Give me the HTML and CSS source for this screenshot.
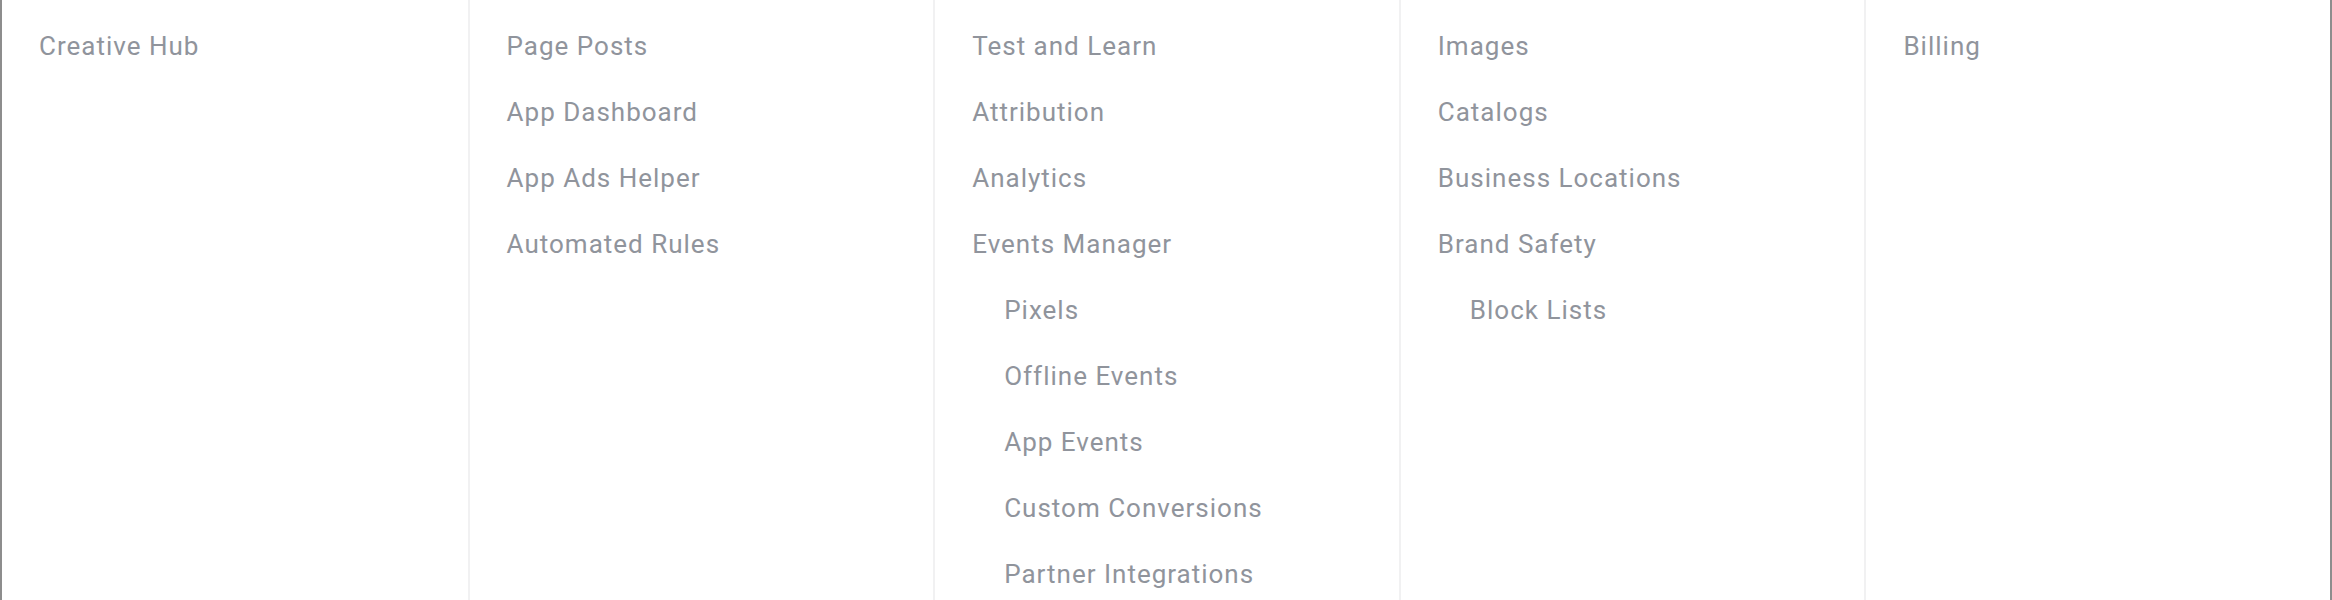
FILE: index.html
```html
<!DOCTYPE html>
<html>
<head>
<meta charset="utf-8">
<link rel="stylesheet" href="styles.css">
</head>
<body>
<div class="menu">
  <ul class="col">
    <li>Creative Hub</li>
  </ul>
  <ul class="col">
    <li>Page Posts</li>
    <li>App Dashboard</li>
    <li>App Ads Helper</li>
    <li>Automated Rules</li>
  </ul>
  <ul class="col">
    <li>Test and Learn</li>
    <li>Attribution</li>
    <li>Analytics</li>
    <li>Events Manager</li>
    <li class="sub">Pixels</li>
    <li class="sub">Offline Events</li>
    <li class="sub">App Events</li>
    <li class="sub">Custom Conversions</li>
    <li class="sub">Partner Integrations</li>
  </ul>
  <ul class="col">
    <li>Images</li>
    <li>Catalogs</li>
    <li>Business Locations</li>
    <li>Brand Safety</li>
    <li class="sub">Block Lists</li>
  </ul>
  <ul class="col">
    <li>Billing</li>
  </ul>
</div>
</body>
</html>
```

FILE: styles.css
```css
html, body {
  margin: 0;
  padding: 0;
  height: 100%;
  background: #fff;
  overflow: hidden;
}
.menu {
  display: grid;
  grid-template-columns: repeat(5, 1fr);
  height: 100%;
  min-height: 640px;
  border-left: 2px solid #8d8d8d;
  border-right: 2px solid #8d8d8d;
  font-family: Roboto, "Liberation Sans", sans-serif;
  font-size: 26px;
  letter-spacing: 1px;
  color: #90949c;
}
.col {
  list-style: none;
  margin: 0;
  padding: 13px 0 0 37px;
}
.col + .col {
  border-left: 2px solid #f1f1f2;
}
.col li {
  line-height: 66px;
  white-space: nowrap;
}
.col li.sub {
  padding-left: 32px;
}
```
